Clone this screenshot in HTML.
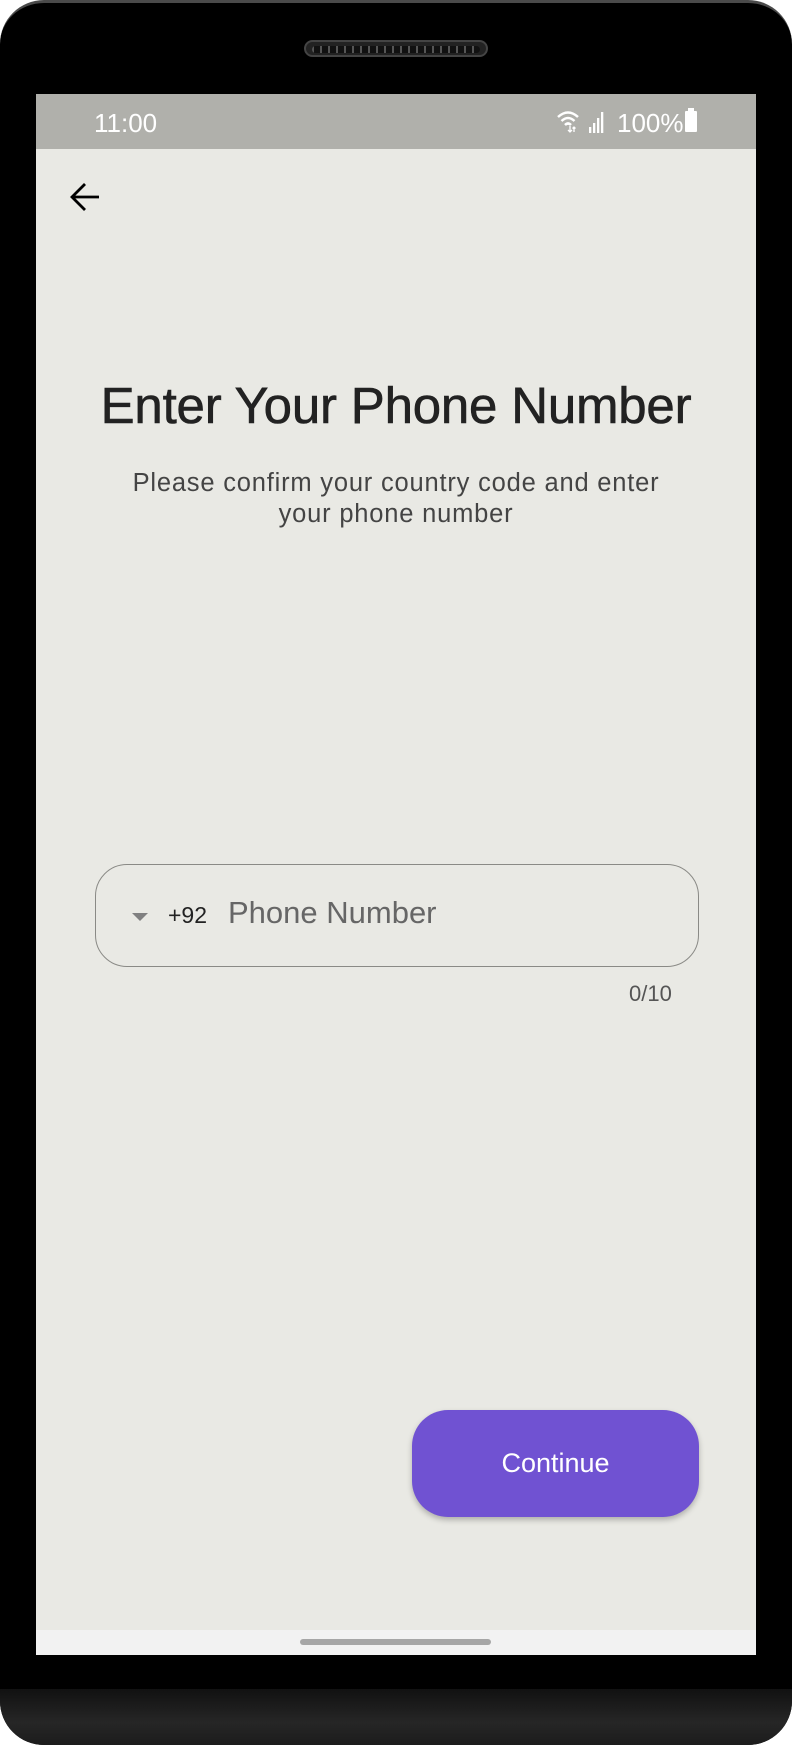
<!DOCTYPE html>
<html><head><meta charset="utf-8"><style>
*{margin:0;padding:0;box-sizing:border-box}
html,body{width:792px;height:1745px;background:#fff;overflow:hidden;font-family:"Liberation Sans",sans-serif}
.dev{position:absolute;left:0;top:0;width:792px;height:1745px;background:#000;border-radius:44px;overflow:hidden;border-top:3px solid #4a4a4a}
.chin{position:absolute;left:0;right:0;top:1686px;bottom:0;background:linear-gradient(#111,#262626 60%,#1c1c1c)}
.spk{position:absolute;left:304px;top:37px;width:184px;height:17px;border-radius:9px;background:#222;border:2px solid #444}
.spk i{position:absolute;left:6px;right:6px;top:4px;height:7px;border-radius:4px;background:repeating-linear-gradient(90deg,#555 0 2px,#111 2px 8px)}
.scr{position:absolute;left:36px;top:91px;width:720px;height:1561px;background:#e9e9e4;overflow:hidden}
.sb{position:absolute;left:0;top:0;width:720px;height:55px;background:#b0b0ab;color:#fff}
.time{position:absolute;left:58px;top:14px;font-size:26px}
.pct{position:absolute;left:581px;top:14px;font-size:26px}
.nav{position:absolute;left:0;top:1536px;width:720px;height:25px;background:#f2f2f2}
.pill{position:absolute;left:264px;top:9px;width:191px;height:6px;border-radius:3px;background:#a6a6a6}
h1{position:absolute;left:0;width:720px;top:282px;text-align:center;font-size:51px;line-height:60px;font-weight:normal;color:#222;letter-spacing:-0.2px;-webkit-text-stroke:0.6px #222}
.sub{position:absolute;left:0;width:720px;top:374px;text-align:center;font-size:25.5px;line-height:31px;color:#444;letter-spacing:0.8px}
.inp{position:absolute;left:59px;top:770px;width:604px;height:103px;border:1.5px solid #8a8a86;border-radius:32px}
.tri{position:absolute;left:36px;top:48px;width:0;height:0;border-left:8px solid transparent;border-right:8px solid transparent;border-top:8px solid #808080}
.cc{position:absolute;left:72px;top:37px;font-size:23px;color:#222}
.ph{position:absolute;left:132px;top:30px;font-size:31px;color:#666}
.cnt{position:absolute;left:593px;top:887px;font-size:22px;color:#555}
.btn{position:absolute;left:376px;top:1316px;width:287px;height:107px;border-radius:36px;background:#7052d2;color:#fff;font-size:27px;text-align:center;line-height:107px;box-shadow:0 3px 6px rgba(0,0,0,.25)}
</style></head><body>
<div class="dev">
<div class="spk"><i></i></div>
<div class="chin"></div>
<div class="scr">
<div class="sb"><div class="time">11:00</div>
<svg style="position:absolute;left:520px;top:15px" width="60" height="26" viewBox="0 0 60 26"><path d="M2 8 Q12 -1 22 8" stroke="#fff" stroke-width="2.5" fill="none"/><path d="M5.5 12 Q12 6 18.5 12" stroke="#fff" stroke-width="2.5" fill="none"/><path d="M9 16 Q12 13 15 16" stroke="#fff" stroke-width="2.5" fill="none"/><path d="M14 17v6M12 21l2 2 2-2M18 23v-5M16.5 19.5l1.5-1.5 1.5 1.5" stroke="#fff" stroke-width="1.3" fill="none"/><rect x="33" y="18" width="2.3" height="6" fill="#fff"/><rect x="37" y="14" width="2.3" height="10" fill="#fff"/><rect x="41" y="9" width="2.3" height="15" fill="#fff"/><rect x="45" y="3" width="2.3" height="21" fill="#fff"/></svg>
<div class="pct">100%</div>
<div style="position:absolute;left:649px;top:17px;width:12px;height:21px;background:#fff;border-radius:1px"></div>
<div style="position:absolute;left:652px;top:14px;width:6px;height:3px;background:#fff"></div>
</div>
<svg style="position:absolute;left:32px;top:85px" width="36" height="36" viewBox="0 0 36 36"><path d="M31 18H5M17 5L4 18l13 13" stroke="#000" stroke-width="2.8" fill="none"/></svg>
<h1>Enter Your Phone Number</h1>
<div class="sub">Please confirm your country code and enter<br>your phone number</div>
<div class="inp"><div class="tri"></div><div class="cc">+92</div><div class="ph">Phone Number</div></div>
<div class="cnt">0/10</div>
<div class="btn">Continue</div>
<div class="nav"><div class="pill"></div></div>
</div>
</div>
</body></html>
